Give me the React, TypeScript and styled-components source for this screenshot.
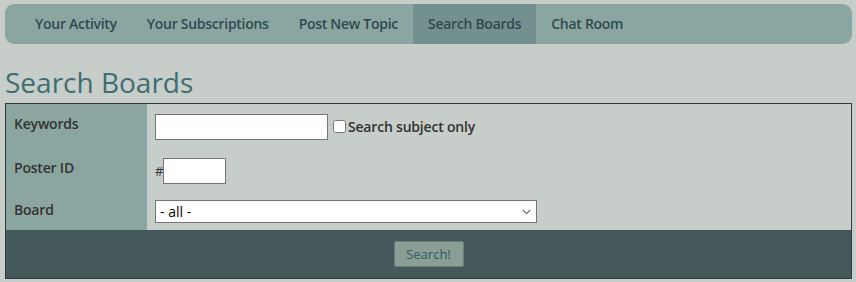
import React from "react";
import styled, { createGlobalStyle } from "styled-components";

const GlobalStyle = createGlobalStyle`
  html, body {
    margin: 0;
    padding: 0;
    background: #c7cdc9;
    font-family: "Open Sans", "Liberation Sans", sans-serif;
  }
`;

const Page = styled.div`
  padding: 4px 4px 0 5px;
`;

const NavBar = styled.nav`
  display: flex;
  height: 40px;
  padding-left: 15px;
  background: #8ba6a1;
  border-radius: 9px;
  overflow: hidden;
`;

const NavTab = styled.a<{ $active?: boolean }>`
  display: flex;
  align-items: center;
  padding: 0 15px 1px;
  font-size: 14px;
  font-weight: 600;
  letter-spacing: -0.28px;
  color: #2e4a50;
  text-decoration: none;
  background: ${({ $active }) => ($active ? "#74908e" : "transparent")};
`;

const Title = styled.h1`
  margin: 18px 0 0;
  font-size: 28px;
  line-height: 41px;
  font-weight: 400;
  color: #3f6d72;
`;

const SearchTable = styled.div`
  border: 1px solid #2f3d3f;
  display: grid;
  grid-template-columns: 141px 1fr;
`;

const LabelCell = styled.div<{ $pad: string }>`
  background: #8ba6a1;
  padding: ${({ $pad }) => $pad};
  padding-left: 8px;
  font-size: 14px;
  font-weight: 600;
  letter-spacing: -0.2px;
  line-height: 20px;
  color: #333;
`;

const FieldCell = styled.div<{ $pad: string }>`
  display: flex;
  align-items: center;
  padding: ${({ $pad }) => $pad};
  padding-left: 8px;
  font-size: 14px;
  color: #333;
`;

const TextInput = styled.input<{ $w: number }>`
  box-sizing: border-box;
  width: ${({ $w }) => $w}px;
  height: 26px;
  margin: 0;
  border: 1px solid #767676;
  background: #fff;
`;

const CheckLabel = styled.label`
  display: flex;
  align-items: center;
  font-weight: 600;
  letter-spacing: -0.2px;
  font-size: 14px;
  color: #333;
`;

const CheckBox = styled.input`
  width: 13px;
  height: 13px;
  margin: 0 2px 0 5px;
`;

const Hash = styled.span`
  font-size: 13px;
  color: #333;
`;

const SelectWrap = styled.div`
  position: relative;
  display: flex;
`;

const BoardSelect = styled.select`
  box-sizing: border-box;
  width: 382px;
  height: 23px;
  border: 1px solid #767676;
  border-radius: 0;
  background: #fff;
  appearance: none;
  font-family: "Open Sans", "Liberation Sans", sans-serif;
  font-size: 14px;
  color: #000;
  padding: 0 4px;
`;

const Chevron = styled.svg`
  position: absolute;
  right: 6px;
  top: 9px;
  pointer-events: none;
`;

const Footer = styled.div`
  grid-column: 1 / -1;
  height: 48px;
  background: #45585a;
  display: flex;
  align-items: center;
  justify-content: center;
`;

const SearchButton = styled.button`
  width: 70px;
  height: 26px;
  background: #8a9e96;
  border: 1px solid #6b7f7a;
  border-radius: 2px;
  color: #2f5c62;
  font-family: "Open Sans", "Liberation Sans", sans-serif;
  font-size: 13px;
  padding: 0 0 1px;
`;

const tabs = ["Your Activity", "Your Subscriptions", "Post New Topic", "Search Boards", "Chat Room"];

export default function App() {
  return (
    <>
      <GlobalStyle />
      <Page>
        <NavBar>
          {tabs.map((t) => (
            <NavTab key={t} $active={t === "Search Boards"}>
              {t}
            </NavTab>
          ))}
        </NavBar>
        <Title>Search Boards</Title>
        <SearchTable>
          <LabelCell $pad="10px 0 15px">Keywords</LabelCell>
          <FieldCell $pad="9px 0 9px">
            <TextInput $w={173} type="text" />
            <CheckLabel>
              <CheckBox type="checkbox" />
              Search subject only
            </CheckLabel>
          </FieldCell>
          <LabelCell $pad="9px 0 0">Poster ID</LabelCell>
          <FieldCell $pad="9px 0 9px">
            <Hash>#</Hash>
            <TextInput $w={63} type="text" />
          </FieldCell>
          <LabelCell $pad="7px 0 0">Board</LabelCell>
          <FieldCell $pad="7px 0 7px">
            <SelectWrap>
              <BoardSelect defaultValue="all">
                <option value="all">- all -</option>
              </BoardSelect>
              <Chevron width="9" height="6" viewBox="0 0 9 6">
                <path d="M0.7 0.9 L4.5 4.7 L8.3 0.9" fill="none" stroke="#6f6f6f" strokeWidth="1.3" />
              </Chevron>
            </SelectWrap>
          </FieldCell>
          <Footer>
            <SearchButton>Search!</SearchButton>
          </Footer>
        </SearchTable>
      </Page>
    </>
  );
}
